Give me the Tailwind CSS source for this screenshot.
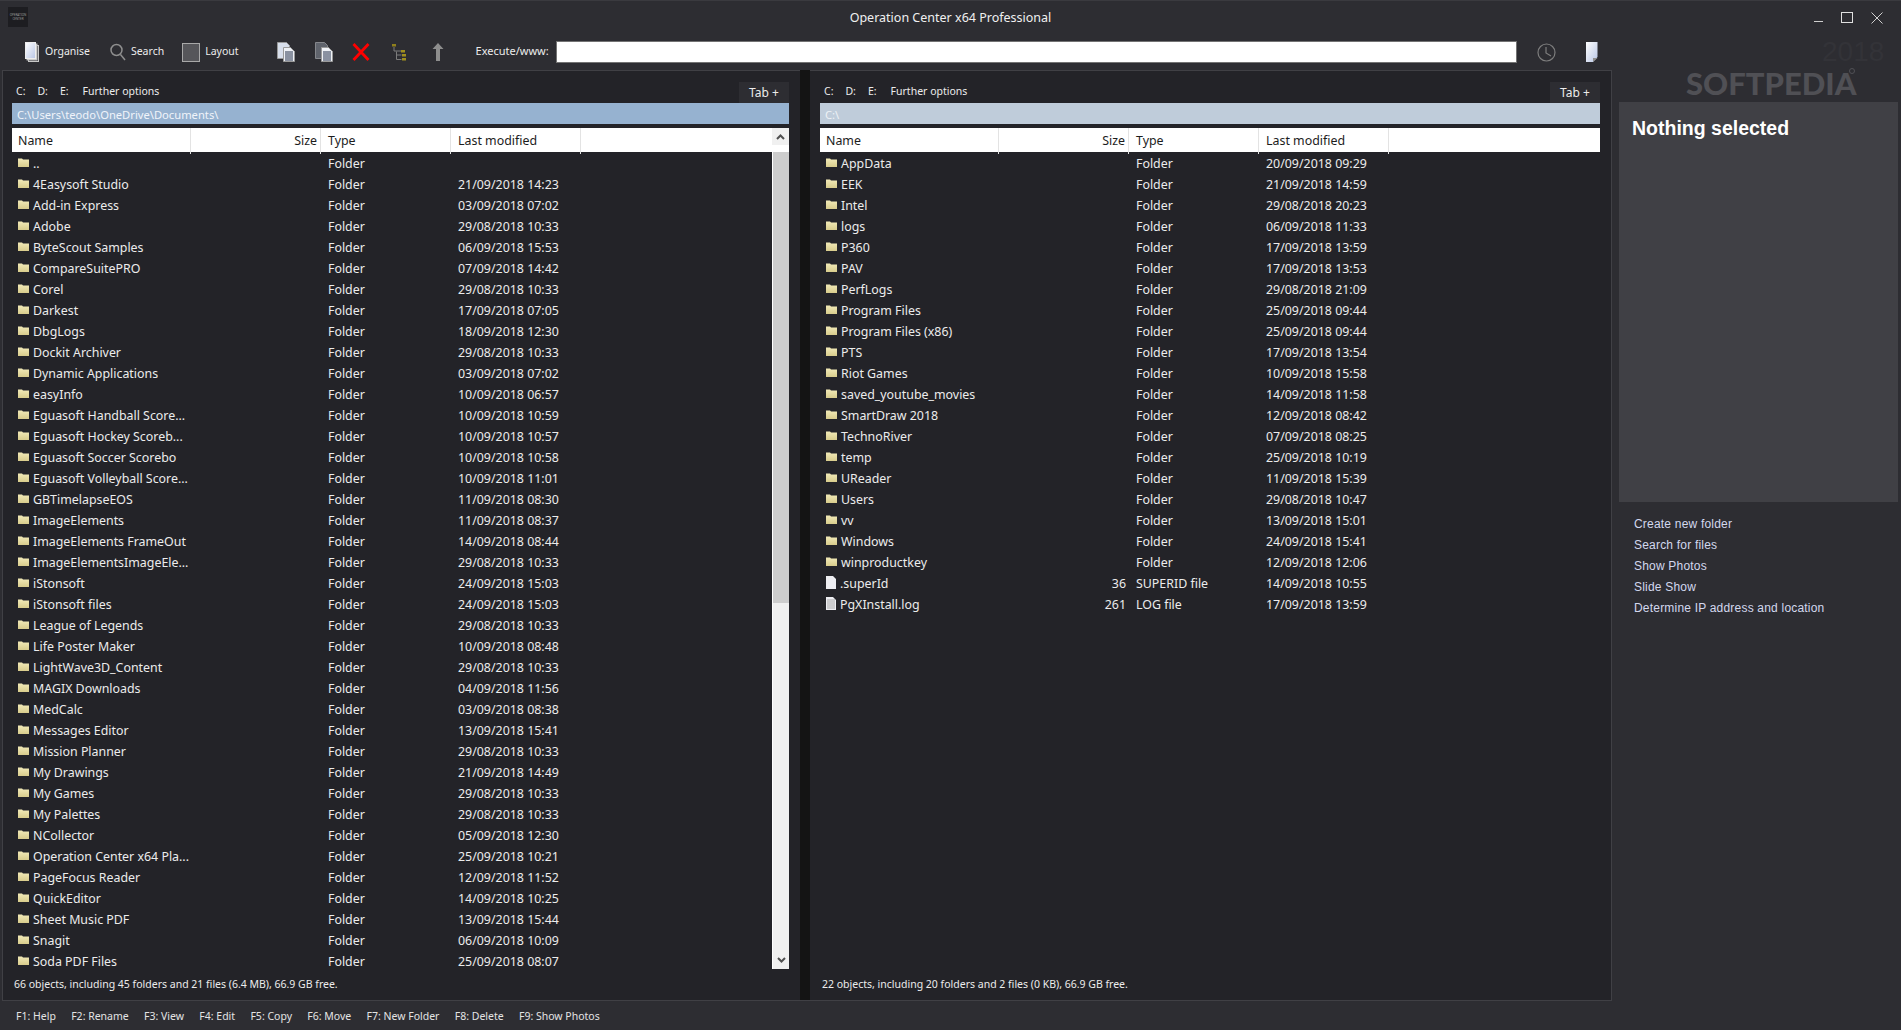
<!DOCTYPE html>
<html lang="en">
<head>
  <meta charset="UTF-8">
  <title>Operation Center x64 Professional</title>
  <script src="https://cdn.jsdelivr.net/npm/@tailwindcss/browser@4"></script>
</head>
<body class="bg-[#2d2d32] font-['Noto_Sans',sans-serif] text-[12.400px] text-[#ececec] overflow-hidden">
  <svg width="0" height="0" class="absolute">
    <defs>
      <linearGradient id="page" x1="0" y1="0" x2="1" y2="1"><stop offset="0" stop-color="#ffffff"/><stop offset="1" stop-color="#b9c6e6"/></linearGradient>
      <linearGradient id="folder" x1="0" y1="0" x2="0" y2="1"><stop offset="0" stop-color="#f2eab8"/><stop offset="1" stop-color="#d8cc8c"/></linearGradient>
    </defs>
  </svg>

  <div class="relative w-[1901px] h-[1030px] flex flex-col border-t border-t-[#3a3a3f]">
    <!-- Title bar -->
    <header class="h-[40px] shrink-0 relative flex items-center justify-center">
      <div class="absolute left-[8px] top-[6px] w-[20px] h-[20px] bg-[#1d1d21] flex flex-col items-center justify-center text-[3px] leading-[4px] text-[#9a9a9a]"><span>OPERATION</span><span>CENTER</span></div>
      <span class="text-[12.500px] text-[#f0f0f0] -mt-[6px]">Operation Center x64 Professional</span>
      <div class="absolute right-[18px] top-[11px] flex items-start gap-[18px]">
        <span class="w-[9px] h-[1px] bg-[#cfcfcf] mt-[9px]"></span>
        <span class="w-[12px] h-[11px] border border-[#e0e0e0]"></span>
        <svg width="12" height="12" viewBox="0 0 12 12" fill="none" stroke="#d0d0d0"><path d="M.5.5l11 11M11.500.5l-11 11"/></svg>
      </div>
    </header>

    <!-- Toolbar -->
    <div class="h-[29px] shrink-0 flex items-start relative text-[10.500px]">
      <div class="flex items-center h-[22px] pl-[25px]">
        <svg width="15" height="21" viewBox="0 0 15 21"><rect x="3.500" y="3.500" width="10" height="16" fill="#3a3a40" stroke="#c8c8c8"/><rect x="2" y="2" width="10" height="16" fill="#ddd" stroke="#bbb"/><rect x=".5" y=".5" width="10" height="16" fill="url(#page)" stroke="#eee"/></svg>
        <span class="ml-[5px]">Organise</span>
        <svg class="ml-[20px]" width="16" height="18" viewBox="0 0 16 18" fill="none" stroke="#8e8e8e" stroke-width="1.500"><circle cx="6.500" cy="7" r="5.500"/><path d="M10.500 11.500l4.500 5.500"/></svg>
        <span class="ml-[5px]">Search</span>
        <div class="ml-[18px] w-[18px] h-[19px] border border-[#a8a8a8] bg-[#56565a]"></div>
        <span class="ml-[5px]">Layout</span>

        <svg class="ml-[38px]" width="18" height="20" viewBox="0 0 18 20"><path d="M.5.5h9l3 3v13h-12z" fill="#d8dfec" stroke="#9a9a9a"/><path d="M6.500 5.500h7l4 4v10h-11z" fill="#eef1f6" stroke="#9a9a9a"/><path d="M8 10h8M8 12h8M8 14h8M8 16h8M8 18h8" stroke="#27324c"/></svg>
        <svg class="ml-[20px]" width="18" height="20" viewBox="0 0 18 20"><path d="M.5.5h9l3 3v13h-12z" fill="#5f636c" stroke="#85878c"/><path d="M6.500 5.500h7l4 4v10h-11z" fill="#eef1f6" stroke="#9a9a9a"/><path d="M8 10h8M8 12h8M8 14h8M8 16h8M8 18h8" stroke="#27324c"/></svg>
        <svg class="ml-[19px]" width="18" height="18" viewBox="0 0 18 18" fill="none" stroke="#ff0000" stroke-width="2.800"><path d="M1.500 1l15 16M16.500 1l-15 16"/></svg>
        <svg class="ml-[22px]" width="14" height="17" viewBox="0 0 14 17"><rect y="0" width="4" height="2.500" fill="#8f7f1c"/><rect x="9" y="6" width="4" height="2.500" fill="#a08f1e"/><rect x="10" y="10" width="4" height="2.500" fill="#a08f1e"/><rect x="10" y="14" width="4" height="2.500" fill="#a08f1e"/><path d="M2 3v4h7M4.500 7.500v8h5M4.500 11h5" fill="none" stroke="#7c7c7c"/></svg>
        <svg class="ml-[26px]" width="12" height="18" viewBox="0 0 12 18" fill="#8d8d8d"><path d="M6 0l5.500 6H8v12H4V6H.5z"/></svg>
        <span class="ml-[32px] -mt-[2px] text-[11px]">Execute/www:</span>
      </div>
      <div class="absolute left-[556px] top-0 w-[961px] h-[22px] bg-white border border-[#737373]"></div>
      <svg class="absolute left-[1537px] top-[2px]" width="19" height="19" viewBox="0 0 19 19" fill="none" stroke="#7d7d7d" stroke-width="1.200"><circle cx="9.500" cy="9.500" r="8.500"/><path d="M9 4v6l5 3"/></svg>
      <svg class="absolute left-[1586px] top-[1px]" width="12" height="20" viewBox="0 0 12 20"><path d="M0 0h11.500v15l-4.500 5H0z" fill="url(#page)"/><path d="M7 20v-4h4.500z" fill="#8e8e8e"/></svg>
    </div>

    <!-- Main -->
    <div class="flex h-[931px] shrink-0">
      <div class="flex w-[1610px] shrink-0 ml-[2px] bg-[#232328] border-t border-r border-b border-[#404045] border-l">
        <div id="leftPanel" class="w-[797px] shrink-0 pl-[9px] pr-[11px]"></div>
        <div class="w-[10px] shrink-0 bg-[#141414] mt-[-1px]"></div>
        <div id="rightPanel" class="flex-1 pl-[10px] pr-[11px]"></div>
      </div>
      <aside class="flex-1 pt-[32px] pl-[7px] pr-[3px]">
        <div class="h-[400px] bg-[#404045] pl-[13px] pt-[14px]">
          <h2 class="font-['Liberation_Sans',sans-serif] font-bold text-[19.500px] leading-[24px] text-white">Nothing selected</h2>
        </div>
        <ul class="mt-[12px] pl-[15px] font-['Liberation_Sans',sans-serif] text-[12px] leading-[21px] tracking-[0.2px] text-[#d3d8ee]">
          <li>Create new folder</li>
          <li>Search for files</li>
          <li>Show Photos</li>
          <li>Slide Show</li>
          <li>Determine IP address and location</li>
        </ul>
      </aside>
    </div>

    <!-- Function keys -->
    <footer class="flex-1 flex items-start pt-[5px] pl-[16px] gap-[15.300px] text-[10.500px] leading-[21px] text-[#e4e4e4]">
      <span>F1: Help</span><span>F2: Rename</span><span>F3: View</span><span>F4: Edit</span><span>F5: Copy</span><span>F6: Move</span><span>F7: New Folder</span><span>F8: Delete</span><span>F9: Show Photos</span>
    </footer>

    <!-- watermark -->
    <div class="absolute left-[1822px] top-[36px] font-['Liberation_Sans',sans-serif] text-[28px] leading-[30px] text-[#333338]">2018</div>
    <div class="absolute left-[1686px] top-[65px] font-['Lato',sans-serif] font-black text-[31px] leading-[34px] text-[#505055]">SOFTPEDIA</div>
    <div class="absolute left-[1849px] top-[67px] w-[6px] h-[6px] rounded-full border border-[#505055]"></div>
  </div>

  <script>
    const leftRows = [
      ["..","","Folder",""],["4Easysoft Studio","","Folder","21/09/2018 14:23"],["Add-in Express","","Folder","03/09/2018 07:02"],["Adobe","","Folder","29/08/2018 10:33"],
      ["ByteScout Samples","","Folder","06/09/2018 15:53"],["CompareSuitePRO","","Folder","07/09/2018 14:42"],["Corel","","Folder","29/08/2018 10:33"],["Darkest","","Folder","17/09/2018 07:05"],
      ["DbgLogs","","Folder","18/09/2018 12:30"],["Dockit Archiver","","Folder","29/08/2018 10:33"],["Dynamic Applications","","Folder","03/09/2018 07:02"],["easyInfo","","Folder","10/09/2018 06:57"],
      ["Eguasoft Handball Score...","","Folder","10/09/2018 10:59"],["Eguasoft Hockey Scoreb...","","Folder","10/09/2018 10:57"],["Eguasoft Soccer Scorebo","","Folder","10/09/2018 10:58"],["Eguasoft Volleyball Score...","","Folder","10/09/2018 11:01"],
      ["GBTimelapseEOS","","Folder","11/09/2018 08:30"],["ImageElements","","Folder","11/09/2018 08:37"],["ImageElements FrameOut","","Folder","14/09/2018 08:44"],["ImageElementsImageEle...","","Folder","29/08/2018 10:33"],
      ["iStonsoft","","Folder","24/09/2018 15:03"],["iStonsoft files","","Folder","24/09/2018 15:03"],["League of Legends","","Folder","29/08/2018 10:33"],["Life Poster Maker","","Folder","10/09/2018 08:48"],
      ["LightWave3D_Content","","Folder","29/08/2018 10:33"],["MAGIX Downloads","","Folder","04/09/2018 11:56"],["MedCalc","","Folder","03/09/2018 08:38"],["Messages Editor","","Folder","13/09/2018 15:41"],
      ["Mission Planner","","Folder","29/08/2018 10:33"],["My Drawings","","Folder","21/09/2018 14:49"],["My Games","","Folder","29/08/2018 10:33"],["My Palettes","","Folder","29/08/2018 10:33"],
      ["NCollector","","Folder","05/09/2018 12:30"],["Operation Center x64 Pla...","","Folder","25/09/2018 10:21"],["PageFocus Reader","","Folder","12/09/2018 11:52"],["QuickEditor","","Folder","14/09/2018 10:25"],
      ["Sheet Music PDF","","Folder","13/09/2018 15:44"],["Snagit","","Folder","06/09/2018 10:09"],["Soda PDF Files","","Folder","25/09/2018 08:07"]
    ];
    const rightRows = [
      ["AppData","","Folder","20/09/2018 09:29"],["EEK","","Folder","21/09/2018 14:59"],["Intel","","Folder","29/08/2018 20:23"],["logs","","Folder","06/09/2018 11:33"],
      ["P360","","Folder","17/09/2018 13:59"],["PAV","","Folder","17/09/2018 13:53"],["PerfLogs","","Folder","29/08/2018 21:09"],["Program Files","","Folder","25/09/2018 09:44"],
      ["Program Files (x86)","","Folder","25/09/2018 09:44"],["PTS","","Folder","17/09/2018 13:54"],["Riot Games","","Folder","10/09/2018 15:58"],["saved_youtube_movies","","Folder","14/09/2018 11:58"],
      ["SmartDraw 2018","","Folder","12/09/2018 08:42"],["TechnoRiver","","Folder","07/09/2018 08:25"],["temp","","Folder","25/09/2018 10:19"],["UReader","","Folder","11/09/2018 15:39"],
      ["Users","","Folder","29/08/2018 10:47"],["vv","","Folder","13/09/2018 15:01"],["Windows","","Folder","24/09/2018 15:41"],["winproductkey","","Folder","12/09/2018 12:06"],
      [".superId","36","SUPERID file","14/09/2018 10:55"],["PgXInstall.log","261","LOG file","17/09/2018 13:59"]
    ];

    const folderIcon = `<svg class="shrink-0 -mt-[2px]" width="11" height="9" viewBox="0 0 11 9"><path d="M0 .5h4l1 1h6V9H0z" fill="url(#folder)"/></svg>`;
    const fileIcon = `<svg class="shrink-0 -mt-[2px]" width="10" height="13" viewBox="0 0 10 13"><path d="M0 0h7l3 3v10H0z" fill="#eeeef2"/></svg>`;
    const logIcon = `<svg class="shrink-0 -mt-[2px]" width="10" height="13" viewBox="0 0 10 13"><path d="M0 0h7l3 3v10H0z" fill="#eeeef2"/><path d="M1 3h8M1 5h8M1 7h8M1 9h8M1 11h8" stroke="#a9a9a9"/></svg>`;

    function iconFor(name, type) {
      if (type === "Folder") return folderIcon;
      return name.endsWith(".log") ? logIcon : fileIcon;
    }

    function renderRow(r) {
      return `<div class="grid grid-cols-[179px_130px_130px_130px] h-[21px] leading-[23px] whitespace-nowrap">
        <div class="flex items-center gap-[4px] pl-[6px] overflow-hidden">${iconFor(r[0], r[2])}<span>${r[0]}</span></div>
        <div class="text-right pr-[3px]">${r[1]}</div>
        <div class="pl-[7px]">${r[2]}</div>
        <div class="pl-[7px]">${r[3]}</div>
      </div>`;
    }

    function renderPanel(id, path, pathClass, rows, status, scroll) {
      document.getElementById(id).innerHTML = `
        <div class="h-[32px] flex items-end justify-between">
          <div class="flex gap-[12px] pl-[4px] pb-[4px] text-[10.500px] leading-[16px]"><span>C:</span><span>D:</span><span>E:</span><span class="ml-[2px]">Further options</span></div>
          <div class="w-[50px] h-[21px] bg-[#2d2d32] text-center text-[12px] leading-[22px]">Tab +</div>
        </div>
        <div class="h-[21px] leading-[23px] pl-[5px] text-[11.200px] ${pathClass}">${path}</div>
        <div class="mt-[4px] h-[24px] bg-white text-[#1c1c1c] grid grid-cols-[179px_130px_130px_130px] leading-[26px] relative">
          <div class="pl-[6px] border-r border-[#e3e3e3]">Name</div>
          <div class="text-right pr-[3px] border-r border-[#e3e3e3]">Size</div>
          <div class="pl-[7px] border-r border-[#e3e3e3]">Type</div>
          <div class="pl-[7px] border-r border-[#e3e3e3]">Last modified</div>
          ${scroll ? `<div class="absolute right-0 top-0 w-[17px] h-[17px] bg-[#f0f0f0] flex items-center justify-center"><svg width="9" height="6" viewBox="0 0 9 6" fill="none" stroke="#505050" stroke-width="2"><path d="M1 5l3.500-3.500L8 5"/></svg></div>` : ""}
        </div>
        <div class="relative h-[817px] overflow-hidden">
          ${rows.map(renderRow).join("")}
          ${scroll ? `<div class="absolute right-0 top-0 bottom-0 w-[17px] bg-[#f0f0f0] border-l border-l-white">
            <div class="mt-[-7px] h-[458px] bg-[#cdcdcd]"></div>
            <div class="absolute bottom-[1px] left-0 right-0 h-[16px] flex items-center justify-center"><svg width="9" height="6" viewBox="0 0 9 6" fill="none" stroke="#505050" stroke-width="2"><path d="M1 1l3.500 3.500L8 1"/></svg></div>
          </div>` : ""}
        </div>
        <div class="pl-[2px] pt-[6px] text-[10.500px] leading-[18px]">${status}</div>`;
    }

    renderPanel("leftPanel", "C:\\Users\\teodo\\OneDrive\\Documents\\", "bg-[#96b2d0] text-[#f0f4fa]", leftRows, "66 objects, including 45 folders and 21 files (6.4 MB), 66.9 GB free.", true);
    renderPanel("rightPanel", "C:\\", "bg-[#bfccda] text-[#eef2f6]", rightRows, "22 objects, including 20 folders and 2 files (0 KB), 66.9 GB free.", false);
  </script>
</body>
</html>
